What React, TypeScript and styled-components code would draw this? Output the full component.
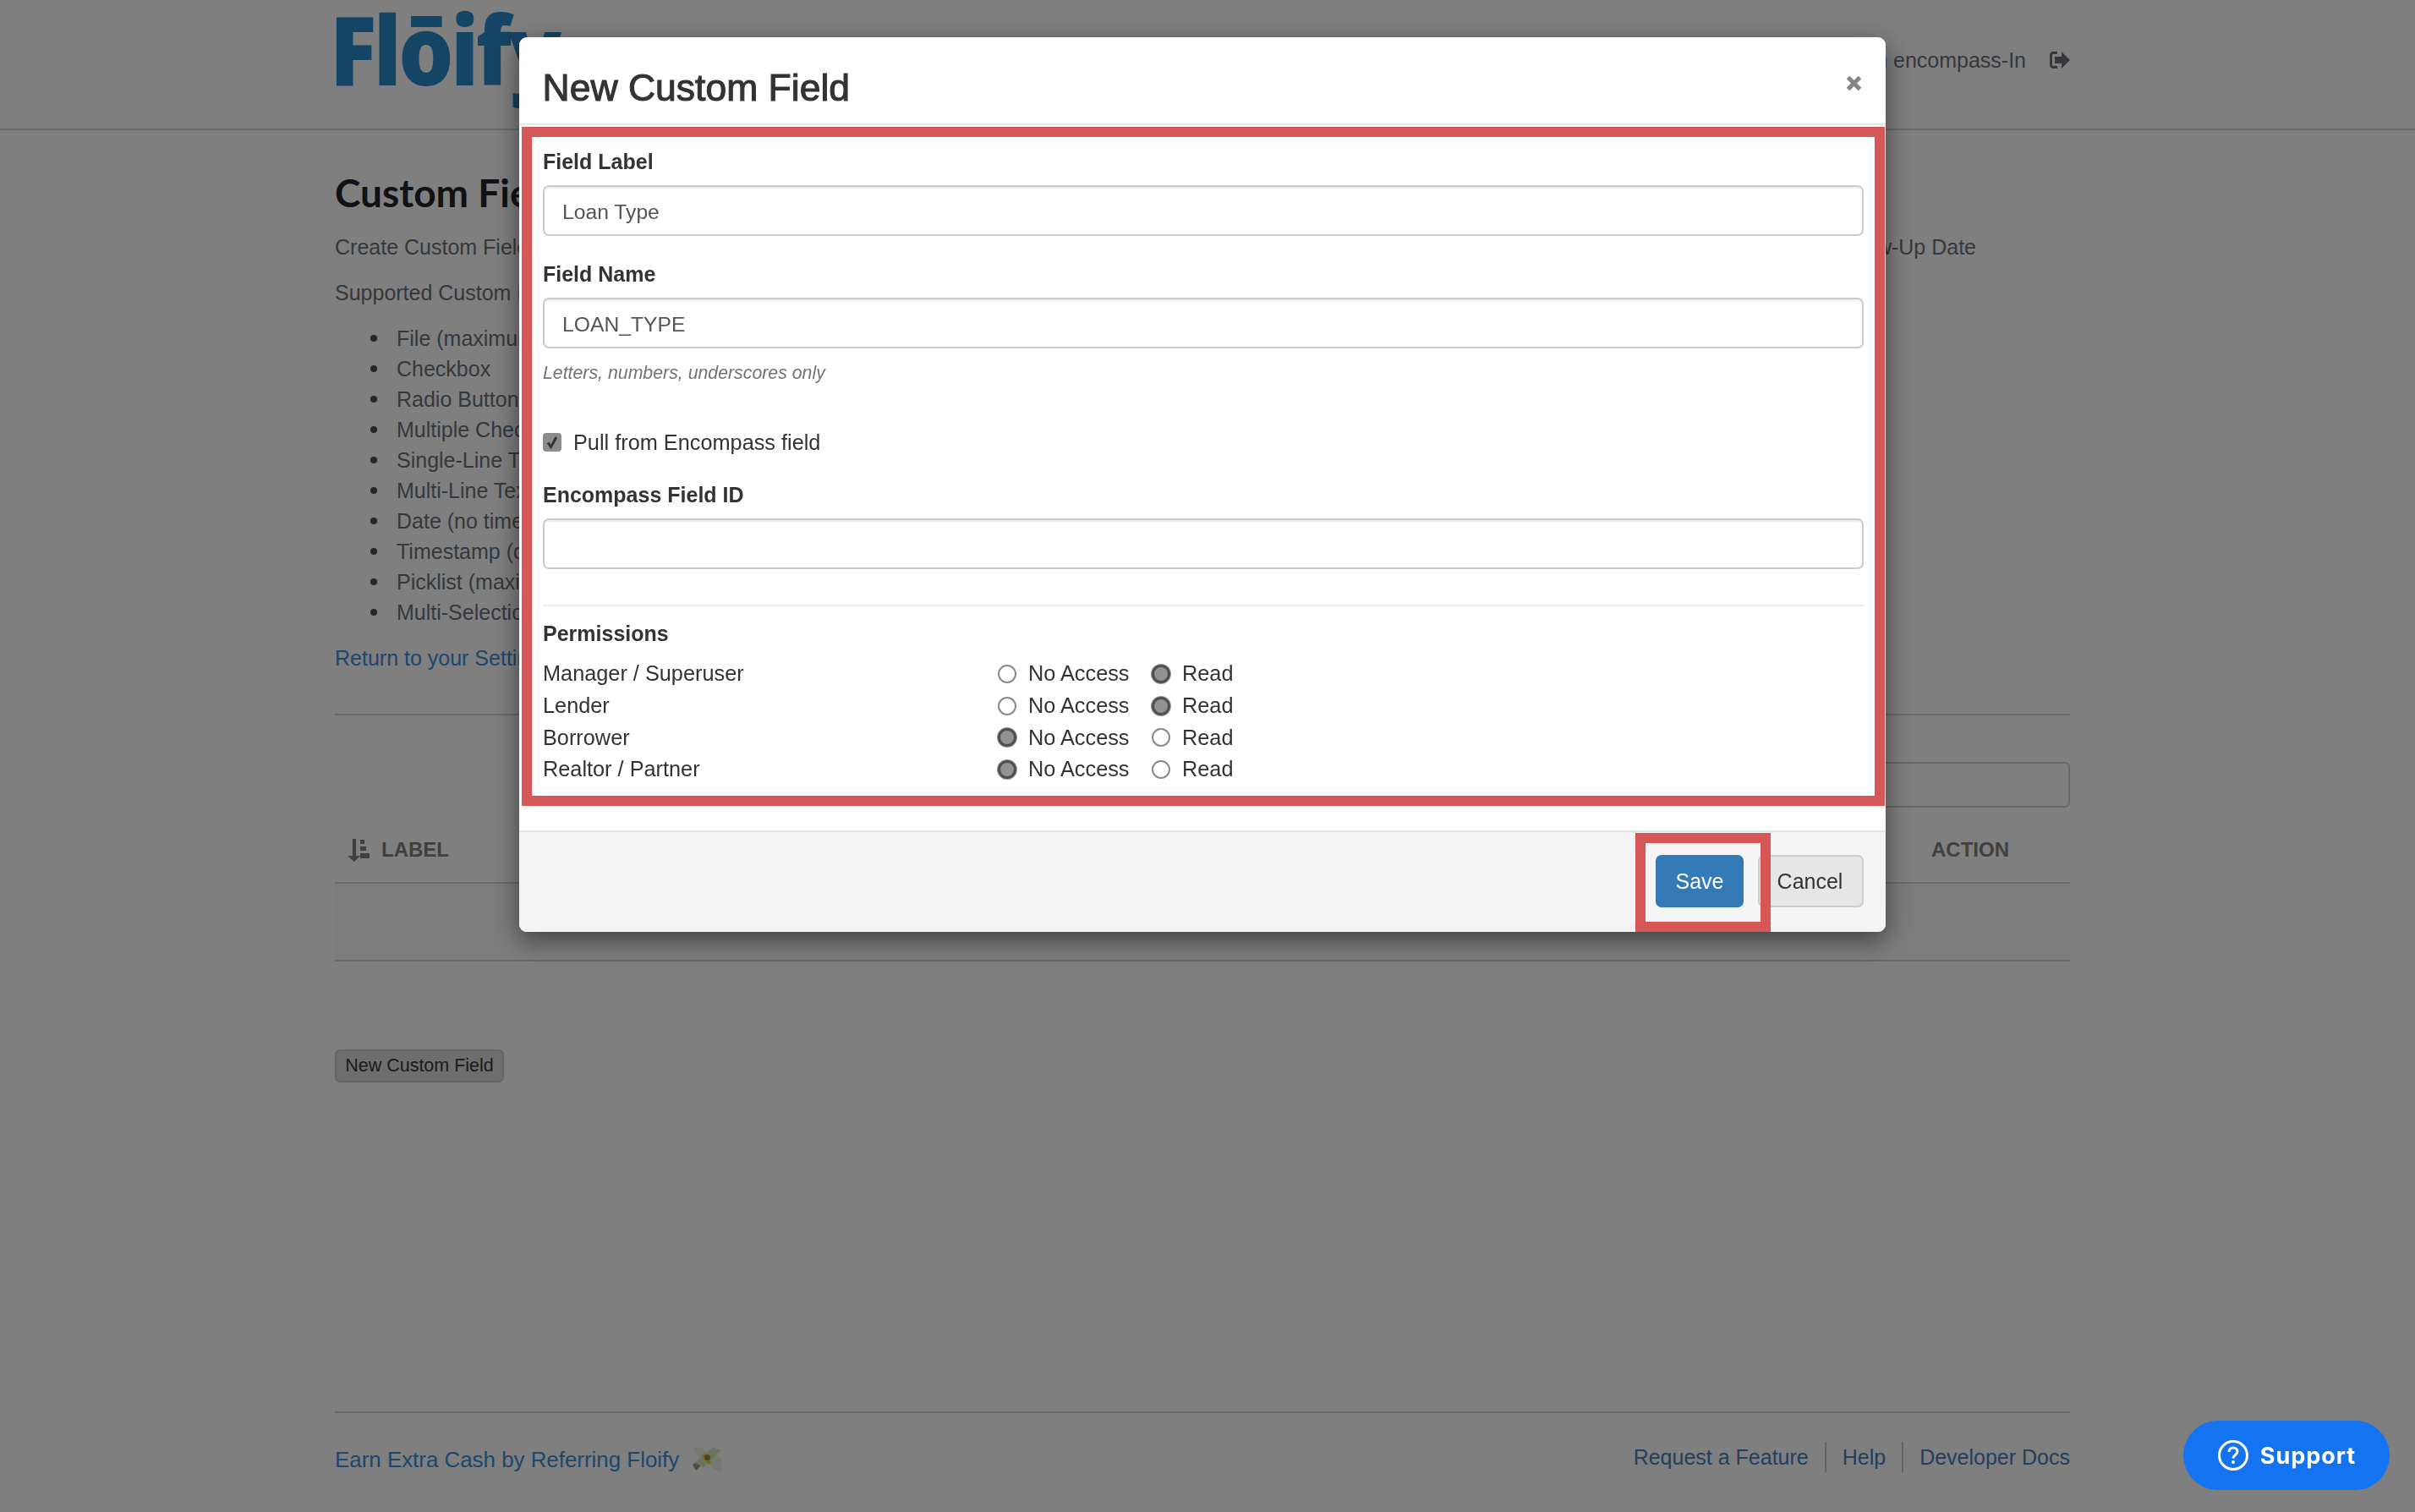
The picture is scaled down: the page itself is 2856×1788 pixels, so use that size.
import React from "react";
import styled, { createGlobalStyle } from "styled-components";

const GlobalStyle = createGlobalStyle`
  html, body {
    margin: 0;
    padding: 0;
    background: #fff;
    font-family: "Liberation Sans", Arial, sans-serif;
    font-size: 25px;
    color: #6d7078;
  }
  * { box-sizing: border-box; }
`;

const Page = styled.div`
  height: 1788px;
  display: flex;
  flex-direction: column;
  overflow: hidden;
`;

const TopBar = styled.header`
  height: 154px;
  flex: none;
  border-bottom: 2px solid #d2d2d2;
  padding: 0 408px 0 396px;
  display: flex;
  justify-content: space-between;
`;

const Logo = styled.div`
  font-family: "Open Sans", sans-serif;
  font-weight: 800;
  font-size: 114px;
  line-height: 100px;
  letter-spacing: -4px;
  color: #2a8aca;
  margin: 7px 0 0 -6px;
  transform: scaleX(0.9);
  transform-origin: left top;
`;

const UserMenu = styled.div`
  display: flex;
  align-items: center;
  gap: 28px;
  height: 142px;
  color: #6d7078;
`;

const Main = styled.main`
  width: 2052px;
  margin-left: 396px;
  flex: 1;
  display: flex;
  flex-direction: column;
`;

const Title = styled.h1`
  margin: 46px 0 0;
  font-family: Lato, sans-serif;
  font-size: 46px;
  line-height: 56px;
  font-weight: 700;
  color: #23252c;
`;

const Intro = styled.p`
  margin: 18px 0 0;
  line-height: 36px;
  display: flex;
  justify-content: space-between;
  padding-right: 111px;
`;

const Para = styled.p`
  margin: 18px 0 0;
  line-height: 36px;
`;

const TypeList = styled.ul`
  margin: 18px 0 0;
  padding: 0 0 0 73px;
  line-height: 36px;
  list-style: none;
`;

const TypeItem = styled.li`
  position: relative;
  &::before {
    content: "";
    position: absolute;
    left: -31px;
    top: 14px;
    width: 8px;
    height: 8px;
    border-radius: 50%;
    background: #4a4d55;
  }
`;

const BackLink = styled.a`
  display: block;
  margin-top: 18px;
  line-height: 36px;
  color: #3c8ed8;
`;

const Rule = styled.hr`
  border: 0;
  border-top: 2px solid #d2d2d2;
  margin: 48px 0 0;
`;

const SearchRow = styled.div`
  margin-top: 55px;
  display: flex;
  justify-content: flex-end;
`;

const SearchBox = styled.div`
  width: 600px;
  height: 54px;
  border: 2px solid #ccc;
  border-radius: 6px;
`;

const TableHead = styled.div`
  height: 90px;
  display: flex;
  justify-content: space-between;
  align-items: center;
  padding: 12px 72px 0 15px;
  font-size: 24px;
  font-weight: 700;
  color: #808080;
  border-bottom: 2px solid #d2d2d2;
`;

const HeadCell = styled.span`
  display: flex;
  align-items: center;
  gap: 14px;
`;

const EmptyRow = styled.div`
  height: 92px;
  background: #f9f9f9;
  border-bottom: 2px solid #d2d2d2;
`;

const NewButton = styled.button`
  align-self: flex-start;
  margin-top: 104px;
  height: 39px;
  width: 200px;
  padding: 0;
  font-family: inherit;
  font-size: 21.5px;
  color: #363636;
  background: #dcdcdc;
  border: 2px solid #c8c8c8;
  border-radius: 6px;
`;

const Footer = styled.footer`
  margin-top: auto;
  margin-bottom: 26px;
  border-top: 2px solid #d2d2d2;
  height: 93px;
  padding-top: 37px;
  display: flex;
  justify-content: space-between;
  align-items: flex-start;
`;

const Referral = styled.a`
  display: flex;
  align-items: center;
  gap: 16px;
  line-height: 36px;
  font-size: 25.9px;
  color: #3c8ed8;
`;

const FooterLinks = styled.nav`
  display: flex;
  margin-top: -3px;
`;

const FooterLink = styled.a`
  color: #487eb8;
  line-height: 36px;
  padding: 0 19px;
  border-left: 2px solid #c4c4c4;
  &:first-child {
    padding-left: 0;
    border-left: none;
  }
  &:last-child {
    padding-right: 0;
  }
`;

const Backdrop = styled.div`
  position: fixed;
  inset: 0;
  background: rgba(0, 0, 0, 0.5);
`;

const Modal = styled.div`
  position: fixed;
  left: 614px;
  top: 44px;
  width: 1616px;
  height: 1058px;
  background: #fff;
  border-radius: 9px;
  box-shadow: 0 9px 30px rgba(0, 0, 0, 0.5);
  display: flex;
  flex-direction: column;
  color: #333;
`;

const ModalHeader = styled.div`
  height: 104px;
  flex: none;
  border-bottom: 2px solid #e5e5e5;
  padding: 0 28px 0 27.500px;
  display: flex;
  justify-content: space-between;
  align-items: center;
`;

const ModalTitle = styled.h2`
  margin: 18px 0 0;
  font-size: 44.5px;
  font-weight: 400;
  -webkit-text-stroke: 1.1px #333;
  color: #333;
`;

const CloseButton = styled.span`
  display: flex;
  margin: 6px 0 0;
`;

const ModalBody = styled.div`
  flex: 1;
  padding: 29px 26px 0 28px;
  display: flex;
  flex-direction: column;
  font-size: 25.3px;
`;

const FieldLabel = styled.label<{ $top?: number }>`
  display: block;
  font-size: 25px;
  font-weight: 700;
  line-height: 28px;
  margin-top: ${(p) => p.$top ?? 0}px;
`;

const TextInput = styled.input`
  display: block;
  width: 100%;
  height: 60px;
  margin-top: 14px;
  padding: 4px 21px 0;
  font-family: inherit;
  font-size: 24.7px;
  color: #555;
  background: #fff;
  border: 2px solid #ccc;
  border-radius: 7px;
  box-shadow: inset 0 2px 2px rgba(0, 0, 0, 0.075);
`;

const HelpText = styled.div`
  margin-top: 16px;
  font-size: 21.3px;
  line-height: 26px;
  font-style: italic;
  color: #737373;
`;

const CheckRow = styled.label`
  display: flex;
  align-items: center;
  gap: 14px;
  margin-top: 54px;
  height: 30px;
`;

const CheckBox = styled.span`
  width: 22px;
  height: 22px;
  border-radius: 4px;
  background: #8c8c8c;
  display: flex;
  align-items: center;
  justify-content: center;
`;

const Divider = styled.hr`
  border: 0;
  border-top: 2px solid #eee;
  margin: 42px 0 0;
`;

const PermissionsGrid = styled.div`
  margin-top: 15px;
`;

const PermRow = styled.div`
  display: grid;
  grid-template-columns: 538px 182px 1fr;
  align-items: center;
  height: 37.7px;
`;

const RadioLabel = styled.label`
  display: flex;
  align-items: center;
  gap: 14px;
`;

const Radio = styled.input.attrs({ type: "radio" })`
  appearance: none;
  width: 22px;
  height: 22px;
  margin: 0;
  border-radius: 50%;
  border: 2px solid #8a8a8a;
  background: #fff;
  &:checked {
    border: 3px solid #4f4f4f;
    background: #929292;
    box-shadow: 0 0 0 1px #999;
  }
`;

const ModalFooter = styled.div`
  height: 120px;
  flex: none;
  background: #f4f4f4;
  border-top: 2px solid #e5e5e5;
  border-radius: 0 0 9px 9px;
  padding: 27px 26px 0 0;
  display: flex;
  justify-content: flex-end;
  gap: 17px;
`;

const ModalButton = styled.button<{ $primary?: boolean }>`
  height: 62px;
  width: ${(p) => (p.$primary ? 104 : 125)}px;
  font-family: inherit;
  font-size: 25px;
  padding: 0 ${(p) => (p.$primary ? 0 : 2)}px 0 0;
  border-radius: 7px;
  color: ${(p) => (p.$primary ? "#fff" : "#333")};
  background: ${(p) => (p.$primary ? "#337ab7" : "#e6e6e6")};
  border: 2px solid ${(p) => (p.$primary ? "#337ab7" : "#ccc")};
`;

const Callout = styled.div<{ $l: number; $t: number; $w: number; $h: number }>`
  position: fixed;
  left: ${(p) => p.$l}px;
  top: ${(p) => p.$t}px;
  width: ${(p) => p.$w}px;
  height: ${(p) => p.$h}px;
  border: 12px solid #d75656;
  pointer-events: none;
`;

const SupportButton = styled.button`
  position: fixed;
  left: 2582px;
  top: 1680px;
  width: 244px;
  height: 82px;
  border: 0;
  border-radius: 41px;
  background: #1473f0;
  color: #fff;
  font-family: Inter, sans-serif;
  font-size: 27px;
  font-weight: 700;
  letter-spacing: 1px;
  display: flex;
  align-items: center;
  justify-content: center;
  gap: 13px;
  padding: 0;
`;

const SignOutIcon = () => (
  <svg width="24" height="20" viewBox="0 0 24 20" fill="#6d7078">
    <path d="M9 0H4C1.800 0 0 1.800 0 4v12c0 2.200 1.800 4 4 4h5v-3H4.500C3.700 17 3 16.300 3 15.500v-11C3 3.700 3.700 3 4.500 3H9z" />
    <path d="M14 0l10 10-10 10v-6H6V6h8z" />
  </svg>
);

const SortIcon = () => (
  <svg width="26" height="27" viewBox="0 0 26 27" fill="#808080">
    <path d="M6 0h4v20h5L8 27 0 20h6z" />
    <path d="M15 1h5v5h-5zM15 9h7v5h-7zM15 17h11v6H15z" />
  </svg>
);

const CloseIcon = () => (
  <svg width="19" height="19" viewBox="0 0 19 19">
    <path d="M2.500 2.500l14 14M16.500 2.500l-14 14" stroke="#858585" strokeWidth="5" />
  </svg>
);

const CheckMark = () => (
  <svg width="14" height="16" viewBox="0 0 14 16">
    <path d="M2 8.500l3.500 5L12 2" fill="none" stroke="#333" strokeWidth="3" />
  </svg>
);

const MoneyWings = () => (
  <svg width="36" height="32" viewBox="0 0 36 32">
    <path d="M0 1l12 1 7 9-9 6C6 12 2 7 0 1z" fill="#f0f0e6" />
    <path d="M35 15l-1 15-10-3-6-9 8-8c3 3 6 4 9 5z" fill="#f0f0e6" />
    <path d="M0 22L21 6l2 4L4 29z" fill="#a0a080" />
    <path d="M3 20L24 1l10 4-21 20z" fill="#d4e8be" />
    <path d="M11 11l8 11 3-3-8-10z" fill="#f5cc3a" />
    <circle cx="17.500" cy="13.500" r="3.500" fill="#a08a30" />
  </svg>
);

const HelpIcon = () => (
  <svg width="38" height="38" viewBox="0 0 38 38">
    <circle cx="19" cy="19" r="16.500" fill="none" stroke="#fff" strokeWidth="3" />
    <path d="M14 15c0-3 2.200-5 5-5s5 2 5 4.500c0 4-5 4-5 8" fill="none" stroke="#fff" strokeWidth="3" />
    <circle cx="19" cy="27" r="2" fill="#fff" />
  </svg>
);

const customTypes = [
  "File (maximum 1)",
  "Checkbox",
  "Radio Button",
  "Multiple Checkbox",
  "Single-Line Text",
  "Multi-Line Text",
  "Date (no time)",
  "Timestamp (date and time)",
  "Picklist (maximum 20)",
  "Multi-Selection Picklist",
];

const permissions = [
  { role: "Manager / Superuser", read: true },
  { role: "Lender", read: true },
  { role: "Borrower", read: false },
  { role: "Realtor / Partner", read: false },
];

export default function App() {
  return (
    <>
      <GlobalStyle />
      <Page>
        <TopBar>
          <Logo>Flōify</Logo>
          <UserMenu>
            <span>Logged in encompass-In</span>
            <SignOutIcon />
          </UserMenu>
        </TopBar>
        <Main>
          <Title>Custom Fields</Title>
          <Intro>
            <span>Create Custom Fields</span>
            <span>Follow-Up Date</span>
          </Intro>
          <Para>Supported Custom Field types:</Para>
          <TypeList>
            {customTypes.map((t) => (
              <TypeItem key={t}>{t}</TypeItem>
            ))}
          </TypeList>
          <BackLink>Return to your Settings</BackLink>
          <Rule />
          <SearchRow>
            <SearchBox />
          </SearchRow>
          <TableHead>
            <HeadCell>
              <SortIcon />
              LABEL
            </HeadCell>
            <HeadCell>ACTION</HeadCell>
          </TableHead>
          <EmptyRow />
          <NewButton>New Custom Field</NewButton>
          <Footer>
            <Referral>
              Earn Extra Cash by Referring Floify
              <MoneyWings />
            </Referral>
            <FooterLinks>
              <FooterLink>Request a Feature</FooterLink>
              <FooterLink>Help</FooterLink>
              <FooterLink>Developer Docs</FooterLink>
            </FooterLinks>
          </Footer>
        </Main>
      </Page>
      <Backdrop />
      <Modal>
        <ModalHeader>
          <ModalTitle>New Custom Field</ModalTitle>
          <CloseButton>
            <CloseIcon />
          </CloseButton>
        </ModalHeader>
        <ModalBody>
          <FieldLabel>Field Label</FieldLabel>
          <TextInput defaultValue="Loan Type" />
          <FieldLabel $top={31}>Field Name</FieldLabel>
          <TextInput defaultValue="LOAN_TYPE" />
          <HelpText>Letters, numbers, underscores only</HelpText>
          <CheckRow>
            <CheckBox>
              <CheckMark />
            </CheckBox>
            Pull from Encompass field
          </CheckRow>
          <FieldLabel $top={33}>Encompass Field ID</FieldLabel>
          <TextInput />
          <Divider />
          <FieldLabel $top={18}>Permissions</FieldLabel>
          <PermissionsGrid>
            {permissions.map((p) => (
              <PermRow key={p.role}>
                <span>{p.role}</span>
                <RadioLabel>
                  <Radio name={p.role} defaultChecked={!p.read} />
                  No Access
                </RadioLabel>
                <RadioLabel>
                  <Radio name={p.role} defaultChecked={p.read} />
                  Read
                </RadioLabel>
              </PermRow>
            ))}
          </PermissionsGrid>
        </ModalBody>
        <ModalFooter>
          <ModalButton $primary>Save</ModalButton>
          <ModalButton>Cancel</ModalButton>
        </ModalFooter>
      </Modal>
      <Callout $l={617} $t={150} $w={1612} $h={803} />
      <Callout $l={1934} $t={985} $w={160} $h={117} />
      <SupportButton>
        <HelpIcon />
        Support
      </SupportButton>
    </>
  );
}
